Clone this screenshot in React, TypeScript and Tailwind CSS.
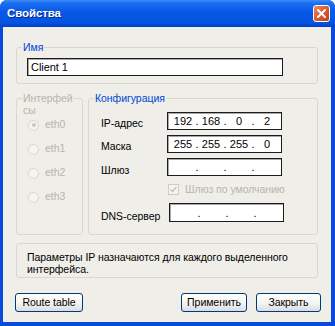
import { Fragment, ReactNode } from 'react';

const font = "font-['Liberation_Sans',Arial,sans-serif]";

function GroupBox({
  label,
  disabled,
  className,
  children,
}: {
  label?: ReactNode;
  disabled?: boolean;
  className?: string;
  children?: ReactNode;
}) {
  return (
    <div className={`relative rounded-[3px] border border-[#dad8cd] ${className ?? ''}`}>
      {label && (
        <span
          className={`absolute left-[5px] top-[-7px] bg-[#efeee9] px-[1px] leading-[12px] ${
            disabled ? 'text-[#b8b5a9]' : 'text-[#0046d5]'
          }`}
        >
          {label}
        </span>
      )}
      {children}
    </div>
  );
}

function IpField({ parts, className }: { parts: string[]; className?: string }) {
  return (
    <div
      className={`flex h-[18px] w-[115px] items-center border border-[#1c1c1c] bg-white pl-[3px] text-[11px] tracking-normal text-black shadow-[inset_1px_1px_0_#a8a8a8] ${
        className ?? ''
      }`}
    >
      {parts.map((p, i) => (
        <Fragment key={i}>
          <span className="w-[24px] text-center leading-[14px]">{p}</span>
          {i < 3 && <span className="w-[4px] text-center leading-[14px]">.</span>}
        </Fragment>
      ))}
    </div>
  );
}

function Radio({ label, checked }: { label: string; checked?: boolean }) {
  return (
    <div className="flex h-[12px] items-center">
      <span className="ml-[11px] flex h-[11px] w-[11px] items-center justify-center rounded-full border border-[#d8d6cb] bg-[#f5f4ef]">
        {checked && <span className="h-[4px] w-[4px] rounded-full bg-[#cbc9bc]" />}
      </span>
      <span className="ml-[6px] text-[#b8b5a9]">{label}</span>
    </div>
  );
}

function Button({ children, className }: { children: ReactNode; className?: string }) {
  return (
    <button
      className={`flex h-[19px] items-center justify-center rounded-[3px] border border-[#003c74] bg-[linear-gradient(180deg,#ffffff_0%,#f4f4f0_55%,#d9dbe6_100%)] text-black ${
        className ?? ''
      }`}
    >
      {children}
    </button>
  );
}

export default function App() {
  return (
    <div
      className={`flex h-[326px] w-[335px] flex-col overflow-hidden rounded-t-[7px] bg-[#0a4ad8] text-[10.5px] tracking-[-0.05px] ${font}`}
    >
      {/* title bar */}
      <div className="flex h-[27px] shrink-0 items-center justify-between bg-[linear-gradient(180deg,#3d8cf5_0%,#1a6ef0_12%,#0758e6_45%,#0454e2_85%,#0340c4_100%)] pl-[7px] pr-[5px]">
        <span className="mt-[1px] text-[11.5px] font-bold tracking-[-0.1px] text-white [text-shadow:1px_1px_0_#0a2a8a]">
          Свойства
        </span>
        <div className="flex h-[17px] w-[17px] items-center justify-center rounded-[3px] border border-white bg-[linear-gradient(135deg,#f08a60_0%,#dc5a30_50%,#c2401a_100%)]">
          <svg width="9" height="9" viewBox="0 0 9 9">
            <path d="M1 1 L8 8 M8 1 L1 8" stroke="white" strokeWidth="2" strokeLinecap="square" />
          </svg>
        </div>
      </div>

      {/* body */}
      <div className="mb-[4px] ml-[3px] mr-[4px] flex flex-1 flex-col bg-[#efeee9] px-[13px] pt-[20px] text-black">
        <GroupBox label="Имя" className="h-[37px] pl-[10px] pt-[10px]">
          <div className="flex h-[18px] w-[256px] items-center border border-[#1c1c1c] bg-white pl-[3px] text-[11px] shadow-[inset_1px_1px_0_#a8a8a8]">
            Client 1
          </div>
        </GroupBox>

        <div className="mt-[14px] flex h-[137px] gap-[5px]">
          <GroupBox
            disabled
            label={
              <>
                Интерфей
                <br />
                сы
              </>
            }
            className="w-[67px] pt-[20px]"
          >
            <div className="flex flex-col gap-[12px]">
              <Radio label="eth0" checked />
              <Radio label="eth1" />
              <Radio label="eth2" />
              <Radio label="eth3" />
            </div>
          </GroupBox>

          <GroupBox label="Конфигурация" className="flex-1 pl-[12px] pt-[13px]">
            <div className="flex flex-col">
              <div className="flex h-[18px] items-start">
                <span className="w-[66px] pt-[5px] leading-[12px]">IP-адрес</span>
                <IpField parts={['192', '168', '0', '2']} />
              </div>
              <div className="mt-[5px] flex h-[18px] items-start">
                <span className="w-[66px] pt-[5px] leading-[12px]">Маска</span>
                <IpField parts={['255', '255', '255', '0']} />
              </div>
              <div className="mt-[5px] flex h-[18px] items-start">
                <span className="w-[66px] pt-[6px] leading-[12px]">Шлюз</span>
                <IpField parts={['', '', '', '']} />
              </div>
              <div className="ml-[67px] mt-[8px] flex h-[11px] items-center">
                <span className="flex h-[11px] w-[11px] items-center justify-center border border-[#cfcdc1] bg-[#f5f4ef]">
                  <svg width="7" height="7" viewBox="0 0 7 7">
                    <path d="M0.5 3.5 L2.5 5.5 L6.5 1" fill="none" stroke="#c4c2b5" strokeWidth="1.5" />
                  </svg>
                </span>
                <span className="ml-[6px] text-[#b8b5a9]">Шлюз по умолчанию</span>
              </div>
              <div className="mt-[8px] flex h-[19px] items-start">
                <span className="w-[66px] pt-[7px] leading-[12px]">DNS-сервер</span>
                <IpField parts={['', '', '', '']} className="ml-[2px] h-[19px]" />
              </div>
            </div>
          </GroupBox>
        </div>

        <GroupBox className="mt-[8px] h-[35px] pl-[10px] pt-[7px]">
          <p className="leading-[12px]">
            Параметры IP назначаются для каждого выделенного
            <br />
            интерфейса.
          </p>
        </GroupBox>

        <div className="mt-[15px] flex items-center">
          <Button className="-ml-[1px] w-[68px]">Route table</Button>
          <div className="ml-auto mr-[-3px] flex gap-[9px]">
            <Button className="w-[66px]">Применить</Button>
            <Button className="w-[65px]">Закрыть</Button>
          </div>
        </div>
      </div>
    </div>
  );
}
